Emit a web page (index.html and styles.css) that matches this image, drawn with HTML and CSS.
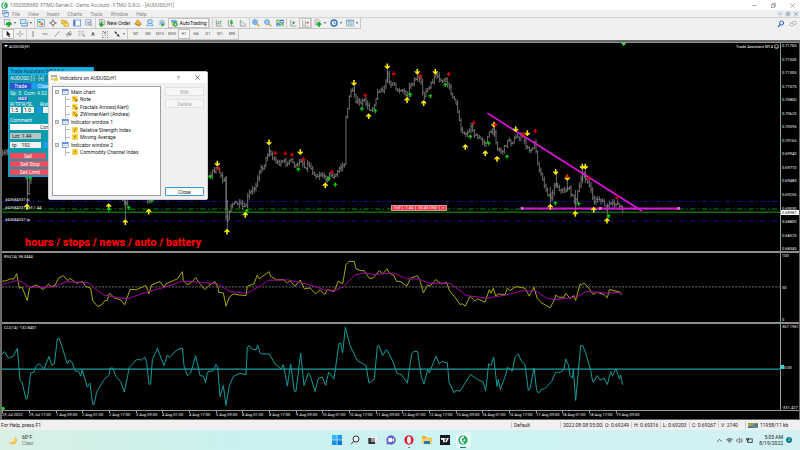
FILE: index.html
```html
<!DOCTYPE html>
<html lang="en">
<head>
<meta charset="utf-8">
<title>FTMO Terminal - AUDUSD,H1</title>
<link rel="stylesheet" href="styles.css">
</head>
<body>
<svg class="defs" aria-hidden="true">
  <symbol id="i-logo" viewBox="0 0 24 24"><circle cx="12" cy="12" r="11" fill="#21a95c"/><path d="M14 3a9 9 0 1 0 0 18v-4a5 5 0 0 1 0-10z" fill="#fff"/><path d="M10 12h4l3-4v8l-3-3z" fill="#fff"/></symbol>
  <symbol id="i-windows" viewBox="0 0 24 24"><rect x="2" y="2" width="15" height="12" fill="#cfe2f6" stroke="#4a82c4" stroke-width="2"/><rect x="7" y="8" width="15" height="14" fill="#e9f2fb" stroke="#4a82c4" stroke-width="2"/><path d="M7 10h15" stroke="#4a82c4" stroke-width="3"/></symbol>
  <symbol id="i-newchart" viewBox="0 0 24 24"><rect x="1" y="2" width="17" height="14" fill="#f2f5f8" stroke="#7f95a8" stroke-width="2"/><path d="M14 8v15M6 15h17" stroke="#1eab2b" stroke-width="7"/></symbol>
  <symbol id="i-profiles" viewBox="0 0 24 24"><rect x="1" y="2" width="17" height="12" fill="#d5e8f7" stroke="#5a90c4" stroke-width="2"/><path d="M5 17v4h17V8" fill="none" stroke="#5a90c4" stroke-width="3"/></symbol>
  <symbol id="i-market" viewBox="0 0 24 24"><rect x="2" y="2" width="20" height="20" fill="#eef6ff" stroke="#4c9de0" stroke-width="2"/><path d="M5 6h6v6H5z" fill="#20b23a"/><path d="M11 11h8v8h-8z" fill="#ee6a30"/><path d="M14 5h5M5 17h4" stroke="#efc838" stroke-width="3"/></symbol>
  <symbol id="i-target" viewBox="0 0 24 24"><circle cx="12" cy="12" r="6" fill="none" stroke="#777" stroke-width="2"/><path d="M12 1v8M12 15v8M1 12h8M15 12h8" stroke="#666" stroke-width="3"/></symbol>
  <symbol id="i-folder" viewBox="0 0 24 24"><path d="M2 3h7l2 3h7v9H2z" fill="#f4cf48" stroke="#c69a20" stroke-width="2"/><path d="M9 11h6l2 3h6v8H9z" fill="#ffe27a" stroke="#c69a20" stroke-width="2"/></symbol>
  <symbol id="i-panel" viewBox="0 0 24 24"><rect x="1" y="3" width="22" height="18" fill="#f4f9ff" stroke="#4787cc" stroke-width="2"/><path d="M2 4h5v16H2z" fill="#3b74c0"/></symbol>
  <symbol id="i-tester" viewBox="0 0 24 24"><rect x="2" y="2" width="16" height="16" fill="#e8eef4" stroke="#8b9fb4" stroke-width="2"/><path d="M5 14l4-6 4 4 4-7" fill="none" stroke="#4d87c7" stroke-width="2"/><circle cx="15" cy="14" r="4" fill="#d8ecfb" stroke="#667f96" stroke-width="2"/><path d="M18 17l5 5" stroke="#dba52b" stroke-width="3"/></symbol>
  <symbol id="i-order" viewBox="0 0 24 24"><path d="M5 1h11l4 4v12H5z" fill="#eee" stroke="#888" stroke-width="2"/><path d="M8 6h7M8 10h9" stroke="#777" stroke-width="2"/><path d="M10 11v12M4 17h12" stroke="#1da829" stroke-width="6"/></symbol>
  <symbol id="i-diamond" viewBox="0 0 24 24"><path d="M11 2l10 11-5 7L3 14z" fill="#f2b431" stroke="#bd7f13" stroke-width="2"/><path d="M3 15l13 6 5-6" fill="none" stroke="#8c671d" stroke-width="2"/></symbol>
  <symbol id="i-expert" viewBox="0 0 24 24"><rect x="5" y="2" width="14" height="12" rx="4" fill="#bcdcf5" stroke="#5093cf" stroke-width="2"/><path d="M2 20l4-6h12l4 6z" fill="#e2f0fb" stroke="#4a92d6" stroke-width="2"/></symbol>
  <symbol id="i-signal" viewBox="0 0 24 24"><circle cx="12" cy="12" r="9" fill="none" stroke="#9eb6c9" stroke-width="2"/><circle cx="12" cy="12" r="5" fill="#a7d2ee" stroke="#5b92ba" stroke-width="2"/><path d="M14 12v10M10 17h9" stroke="#24a23b" stroke-width="3"/></symbol>
  <symbol id="i-auto" viewBox="0 0 24 24"><ellipse cx="12" cy="7" rx="10" ry="5" fill="#63aee4"/><path d="M3 10c4 4 14 4 18 0l-2 9c-3 4-11 4-14 0z" fill="#f3ca43"/><circle cx="16" cy="16" r="7" fill="#22a640"/><path d="M14 12l6 4-6 4z" fill="#fff"/></symbol>
  <symbol id="i-bars" viewBox="0 0 24 24"><path d="M4 2v19h18" fill="none" stroke="#777" stroke-width="2"/><path d="M10 6v10M7 14h3M16 5v12M16 7h4" fill="none" stroke="#239b32" stroke-width="2"/></symbol>
  <symbol id="i-candles" viewBox="0 0 24 24"><path d="M4 2v19h18" fill="none" stroke="#777" stroke-width="2"/><path d="M13 2v17" stroke="#17812a" stroke-width="2"/><path d="M10 5h7v10h-7z" fill="#25b442"/></symbol>
  <symbol id="i-line" viewBox="0 0 24 24"><path d="M4 2v19h18" fill="none" stroke="#777" stroke-width="2"/><path d="M6 7c6 0 7 9 15 9" fill="none" stroke="#35a64b" stroke-width="2"/></symbol>
  <symbol id="i-zoomin" viewBox="0 0 24 24"><path d="M14 14l8 8" stroke="#d9a32b" stroke-width="4"/><circle cx="9" cy="9" r="7" fill="#d8edfc" stroke="#3f8cd5" stroke-width="3"/><path d="M9 5v8M5 9h8" stroke="#246fbb" stroke-width="2"/></symbol>
  <symbol id="i-zoomout" viewBox="0 0 24 24"><path d="M14 14l8 8" stroke="#d9a32b" stroke-width="4"/><circle cx="9" cy="9" r="7" fill="#d8edfc" stroke="#3f8cd5" stroke-width="3"/><path d="M5 9h8" stroke="#246fbb" stroke-width="2"/></symbol>
  <symbol id="i-tile" viewBox="0 0 24 24"><path d="M1 2h10v9H1zM13 13h10v9H13z" fill="#55b24c"/><path d="M13 2h10v9H13zM1 13h10v9H1z" fill="#2e6fc2"/><path d="M3 6h6v3H3zM15 6h6v3h-6zM3 17h6v3H3zM15 17h6v3h-6z" fill="#e6f3ff"/></symbol>
  <symbol id="i-scroll" viewBox="0 0 24 24"><path d="M5 3v18h17" fill="none" stroke="#777" stroke-width="2"/><path d="M11 6l8 5-8 6z" fill="#25a63b"/></symbol>
  <symbol id="i-shift" viewBox="0 0 24 24"><path d="M5 3v18h17M13 4v14" fill="none" stroke="#6d7f91" stroke-width="2"/><path d="M22 6v9l-7-4z" fill="#cb5540"/></symbol>
  <symbol id="i-indic" viewBox="0 0 24 24"><path d="M3 2h11l4 4v12H3z" fill="#eee" stroke="#999" stroke-width="2"/><path d="M7 14c2 0 2-9 5-8" fill="none" stroke="#666" stroke-width="2"/><path d="M15 9v14M8 16h14" stroke="#1cae2b" stroke-width="6"/></symbol>
  <symbol id="i-clock" viewBox="0 0 24 24"><circle cx="12" cy="12" r="9" fill="#f1f8ff" stroke="#2a73c5" stroke-width="4"/><path d="M12 6v7h5" fill="none" stroke="#555" stroke-width="2"/></symbol>
  <symbol id="i-template" viewBox="0 0 24 24"><rect x="2" y="3" width="20" height="18" fill="#e3eefa" stroke="#6a93bd" stroke-width="2"/><path d="M2 6h20" stroke="#6a93bd" stroke-width="3"/><path d="M5 13l5-3 4 3 5-3M5 18l5-3 4 3 5-3" fill="none" stroke="#6c9c83" stroke-width="2"/></symbol>
  <symbol id="i-cursor" viewBox="0 0 24 24"><path d="M8 2v17l4-4 3 7 3-1-3-7h5z" fill="#222"/></symbol>
  <symbol id="i-cross" viewBox="0 0 24 24"><path d="M12 2v8M12 14v8M2 12h8M14 12h8" stroke="#777" stroke-width="2"/></symbol>
  <symbol id="i-vline" viewBox="0 0 24 24"><path d="M12 3v18" stroke="#555" stroke-width="2"/></symbol>
  <symbol id="i-hline" viewBox="0 0 24 24"><path d="M4 12h16" stroke="#555" stroke-width="2"/></symbol>
  <symbol id="i-trend" viewBox="0 0 24 24"><path d="M4 20L20 4" stroke="#666" stroke-width="2"/></symbol>
  <symbol id="i-channel" viewBox="0 0 24 24"><path d="M2 16L18 3M5 21L21 8M5 12l14 1M10 7l7 11" stroke="#666" stroke-width="2"/></symbol>
  <symbol id="i-fibo" viewBox="0 0 24 24"><path d="M3 4h18M3 10h18M3 16h14" stroke="#777" stroke-width="2" stroke-dasharray="2 2"/><path d="M17 15h5v6" fill="none" stroke="#777" stroke-width="2"/></symbol>
  <symbol id="i-arrows" viewBox="0 0 24 24"><path d="M4 4l8 3-5 5zM20 20l-9-2 6-6z" fill="#333"/><path d="M8 8l8 8" stroke="#333" stroke-width="2"/></symbol>
  <symbol id="i-caret" viewBox="0 0 6 6"><path d="M0 1h6L3 5z" fill="#222"/></symbol>
  <symbol id="i-search" viewBox="0 0 24 24"><circle cx="14" cy="9" r="6" fill="none" stroke="#2869c6" stroke-width="3"/><path d="M10 13l-7 8" stroke="#2869c6" stroke-width="4"/></symbol>
  <symbol id="i-chat" viewBox="0 0 30 24"><ellipse cx="19" cy="8" rx="9" ry="6" fill="#eee" stroke="#999" stroke-width="2"/><ellipse cx="10" cy="14" rx="8" ry="5" fill="#f8f8f8" stroke="#888" stroke-width="2"/></symbol>
  <symbol id="i-min" viewBox="0 0 12 12"><path d="M1 6h10" stroke="currentColor" stroke-width="1.5"/></symbol>
  <symbol id="i-restore" viewBox="0 0 12 12"><path d="M1 4h7v7H1zM4 4V1h7v7H8" fill="none" stroke="currentColor" stroke-width="1.5"/></symbol>
  <symbol id="i-close" viewBox="0 0 12 12"><path d="M1 1l10 10M11 1L1 11" stroke="currentColor" stroke-width="1.5"/></symbol>
  <symbol id="i-win" viewBox="0 0 24 18"><rect x="1" y="1" width="20" height="16" fill="#fff" stroke="#2a66d8" stroke-width="2"/><path d="M1 3h20" stroke="#2a66d8" stroke-width="4"/><path d="M4 13l4-5 4 5 5-5" fill="none" stroke="#6d9ae6" stroke-width="2"/></symbol>
  <symbol id="i-fx" viewBox="0 0 18 18"><rect x="0" y="0" width="18" height="18" rx="2" fill="#f7d548"/><path d="M12 4c-3-1-3 1-3 4s-1 6-3 6M6 8h6" fill="none" stroke="#a87809" stroke-width="2"/></symbol>
  <symbol id="i-fxc" viewBox="0 0 18 18"><rect x="0" y="0" width="17" height="17" rx="2" fill="#f7d548"/><path d="M4 4l5 5M9 4L5 9" stroke="#7d5b0a" stroke-width="2"/><path d="M9 13l4-4 4 4-4 4z" fill="#e4a811" stroke="#6e5413" stroke-width="2"/></symbol>
</svg>

<div class="app">
  <header class="titlebar">
    <svg class="ico6"><use href="#i-logo"/></svg>
    <span class="title">1300308680: FTMO-Server2 - Demo Account - FTMO S.R.O. - [AUDUSD,H1]</span>
    <div class="winbtns">
      <button aria-label="Minimize"><svg><use href="#i-min"/></svg></button>
      <button aria-label="Restore"><svg><use href="#i-restore"/></svg></button>
      <button aria-label="Close"><svg><use href="#i-close"/></svg></button>
    </div>
  </header>
  <nav class="menubar">
    <svg class="ico6"><use href="#i-windows"/></svg>
    <button>File</button><button>View</button><button>Insert</button><button>Charts</button><button>Tools</button><button>Window</button><button>Help</button>
    <div class="mdi">
      <button aria-label="Minimize chart"><svg><use href="#i-min"/></svg></button>
      <button aria-label="Restore chart"><svg><use href="#i-restore"/></svg></button>
      <button aria-label="Close chart"><svg><use href="#i-close"/></svg></button>
    </div>
  </nav>

  <div class="tools">
    <div class="toolrow">
      <div class="bar">
        <button class="dd" aria-label="New chart"><svg><use href="#i-newchart"/></svg><svg class="caret"><use href="#i-caret"/></svg></button>
        <button class="dd" aria-label="Profiles"><svg><use href="#i-profiles"/></svg><svg class="caret"><use href="#i-caret"/></svg></button>
        <i class="sep"></i>
        <button class="tb" aria-label="Market Watch"><svg><use href="#i-market"/></svg></button>
        <button class="tb" aria-label="Data Window"><svg><use href="#i-target"/></svg></button>
        <button class="tb" aria-label="Navigator"><svg><use href="#i-folder"/></svg></button>
        <button class="tb" aria-label="Terminal"><svg><use href="#i-panel"/></svg></button>
        <button class="tb" aria-label="Strategy Tester"><svg><use href="#i-tester"/></svg></button>
        <i class="sep"></i>
        <button class="wide"><svg><use href="#i-order"/></svg>New Order</button>
        <button class="tb" aria-label="MetaEditor"><svg><use href="#i-diamond"/></svg></button>
        <button class="tb" aria-label="Experts"><svg><use href="#i-expert"/></svg></button>
        <button class="tb" aria-label="Signals"><svg><use href="#i-signal"/></svg></button>
        <button class="wide pressed"><svg><use href="#i-auto"/></svg>AutoTrading</button>
        <i class="sep grip"></i>
        <button class="tb" aria-label="Bar chart"><svg><use href="#i-bars"/></svg></button>
        <button class="tb" aria-label="Candlesticks"><svg><use href="#i-candles"/></svg></button>
        <button class="tb" aria-label="Line chart"><svg><use href="#i-line"/></svg></button>
        <i class="sep"></i>
        <button class="tb" aria-label="Zoom in"><svg><use href="#i-zoomin"/></svg></button>
        <button class="tb" aria-label="Zoom out"><svg><use href="#i-zoomout"/></svg></button>
        <button class="tb" aria-label="Tile windows"><svg><use href="#i-tile"/></svg></button>
        <i class="sep"></i>
        <button class="tb" aria-label="Auto scroll"><svg><use href="#i-scroll"/></svg></button>
        <button class="tb pressed" aria-label="Chart shift"><svg><use href="#i-shift"/></svg></button>
        <i class="sep"></i>
        <button class="dd" aria-label="Indicators"><svg><use href="#i-indic"/></svg><svg class="caret"><use href="#i-caret"/></svg></button>
        <button class="dd" aria-label="Periods"><svg><use href="#i-clock"/></svg><svg class="caret"><use href="#i-caret"/></svg></button>
        <button class="dd" aria-label="Templates"><svg><use href="#i-template"/></svg><svg class="caret"><use href="#i-caret"/></svg></button>
      </div>
      <div class="find">
        <button class="tb" aria-label="Search"><svg><use href="#i-search"/></svg></button>
        <button class="tb" aria-label="Chat"><svg><use href="#i-chat"/></svg></button>
      </div>
    </div>
    <div class="toolrow">
      <div class="bar">
        <button class="tb pressed" aria-label="Cursor"><svg><use href="#i-cursor"/></svg></button>
        <button class="tb" aria-label="Crosshair"><svg><use href="#i-cross"/></svg></button>
        <i class="sep"></i>
        <button class="tb" aria-label="Vertical line"><svg><use href="#i-vline"/></svg></button>
        <button class="tb" aria-label="Horizontal line"><svg><use href="#i-hline"/></svg></button>
        <button class="tb" aria-label="Trendline"><svg><use href="#i-trend"/></svg></button>
        <button class="tb" aria-label="Channel"><svg><use href="#i-channel"/></svg></button>
        <button class="tb" aria-label="Fibonacci"><svg><use href="#i-fibo"/></svg></button>
        <button class="tb letter">A</button>
        <button class="tb"><span class="boxed">T</span></button>
        <button class="dd" aria-label="Arrows"><svg><use href="#i-arrows"/></svg><svg class="caret"><use href="#i-caret"/></svg></button>
      </div>
      <div class="bar periods">
        <button class="tb">M1</button><button class="tb">M5</button><button class="tb">M15</button><button class="tb">M30</button><button class="tb pressed">H1</button><button class="tb">H4</button><button class="tb">D1</button><button class="tb">W1</button><button class="tb">MN</button>
      </div>
    </div>
  </div>

  <main class="workspace">
    <section class="pane main">
      <div class="plot">
        <svg id="price" viewBox="6 6 2334 630" preserveAspectRatio="none"></svg>
        <span class="cap sym"><svg class="caret"><path d="M0 1h4L2 3z" fill="#fff"/></svg>AUDUSD,H1</span>
        <span class="cap assist">Trade Assistant MT4<svg viewBox="0 0 12 12"><circle cx="6" cy="6" r="5" fill="none" stroke="#ddd" stroke-width="1.5"/><path d="M3 5h1M8 5h1M3 8q3 2 6 0" stroke="#ddd" stroke-width="1.5" fill="none"/></svg></span>
        <span class="cap line sl">#43684337 sl</span>
        <span class="cap line sell">#43684337 sell 1.44</span>
        <span class="cap line tp">#43684337 tp</span>
        <div class="ticket"><b>Sell</b><b>1.44</b><b>50.40 USD</b><b>x</b></div>
        <div class="slogan">hours / stops / news / auto / battery</div>
      </div>
      <div class="axis prices">
        <span>0.71760</span><span>0.71530</span><span>0.71305</span><span>0.71075</span><span>0.70850</span><span>0.70620</span><span>0.70395</span><span>0.70165</span><span>0.69940</span><span>0.69710</span><span>0.69485</span><span>0.69255</span><span>0.69030</span><span>0.68800</span><span>0.68575</span><span>0.68345</span>
        <span class="now">0.68987</span>
      </div>
    </section>
    <section class="pane">
      <div class="plot"><svg id="rsi" viewBox="6 12 2334 207" preserveAspectRatio="none"></svg><span class="cap head">RSI(14) 38.0444</span></div>
      <div class="axis"><span>100</span><span>50</span><span>0</span></div>
    </section>
    <section class="pane">
      <div class="plot"><svg id="cci" viewBox="6 225 2334 258" preserveAspectRatio="none"></svg><span class="cap head">CCI(14) -132.8401</span></div>
      <div class="axis"><span>367.1961</span><span class="zero">0.00</span><span>-331.427</span></div>
    </section>
    <div class="dates">
      <span>29 Jul 2022</span><span>29 Jul 17:00</span><span>1 Aug 09:00</span><span>2 Aug 01:00</span><span>2 Aug 17:00</span><span>3 Aug 09:00</span><span>4 Aug 01:00</span><span>4 Aug 17:00</span><span>5 Aug 09:00</span><span>8 Aug 01:00</span><span>8 Aug 17:00</span><span>9 Aug 09:00</span><span>10 Aug 01:00</span><span>10 Aug 17:00</span><span>11 Aug 09:00</span><span>12 Aug 01:00</span><span>12 Aug 17:00</span><span>15 Aug 09:00</span><span>16 Aug 01:00</span><span>16 Aug 17:00</span><span>17 Aug 09:00</span><span>18 Aug 01:00</span><span>18 Aug 17:00</span><span>19 Aug 09:00</span>
    </div>

    <section class="assistant" aria-label="Trade Assistant">
      <div class="a-title">Trade Assistant MT4 9.6</div>
      <div class="a-sym">AUDUSD [-] - [+]</div>
      <div class="a-row tabs"><button class="t1">Trade</button><button class="t2">Close</button></div>
      <div class="a-row stat"><span>Sp: 5</span><span>Com: 4.32</span></div>
      <div class="a-row tag"><b>MAX</b></div>
      <div class="a-row labels"><label for="rtp">R/TP</label><label for="rsl">R/SL</label><label for="risk">Risk</label></div>
      <div class="a-row fields"><input id="rtp" value="1.5"><input id="rsl" value="1.0"><i></i><input id="risk" value="2"></div>
      <label class="a-com" for="com">Comment</label>
      <input class="a-in" id="com" value="Comment">
      <div class="a-row pair"><input class="grey" aria-label="Lot" value="Lot: 1.44"><button>E</button></div>
      <div class="a-row pair"><input aria-label="Take profit" value="tp    192"><button>P</button></div>
      <div class="a-sells"><button>Sell</button><button>Sell Stop</button><button>Sell Limit</button></div>
    </section>

    <section class="dialog" role="dialog" aria-label="Indicators on AUDUSD,H1">
      <header><svg class="d-ico" viewBox="0 0 21 18"><rect x="1" y="1" width="16" height="13" fill="#e3f0fd" stroke="#e6a623" stroke-width="2"/><path d="M1 3h16" stroke="#4b94da" stroke-width="3"/><rect x="9" y="8" width="11" height="10" fill="#f5cb32"/></svg><h1>Indicators on AUDUSD,H1</h1><button>?</button><button aria-label="Close dialog"><svg><use href="#i-close"/></svg></button></header>
      <div class="d-body">
        <ul class="tree">
          <li class="grp"><i></i><svg><use href="#i-win"/></svg>Main chart</li>
          <li class="leaf"><i></i><svg><use href="#i-fxc"/></svg>Note</li>
          <li class="leaf"><i></i><svg><use href="#i-fxc"/></svg>Fractals Arrows(Alert)</li>
          <li class="leaf"><i></i><svg><use href="#i-fxc"/></svg>ZWinnerAlert (Andrea)</li>
          <li class="grp"><i></i><svg><use href="#i-win"/></svg>Indicator window 1</li>
          <li class="leaf"><i></i><svg><use href="#i-fx"/></svg>Relative Strength Index</li>
          <li class="leaf"><i></i><svg><use href="#i-fx"/></svg>Moving Average</li>
          <li class="grp"><i></i><svg><use href="#i-win"/></svg>Indicator window 2</li>
          <li class="leaf"><i></i><svg><use href="#i-fx"/></svg>Commodity Channel Index</li>
        </ul>
        <div class="d-btns"><button disabled>Edit</button><button disabled>Delete</button><button class="primary">Close</button></div>
      </div>
    </section>
  </main>

  <footer class="status">
    <span class="help">For Help, press F1</span>
    <span class="c0">Default</span><span class="c1">2022.08.08 05:00</span><span class="c2">O: 0.69249</span><span class="c2">H: 0.69316</span><span class="c2">L: 0.69203</span><span class="c2">C: 0.69267</span><span class="c3">V: 2140</span>
    <span class="net"><svg viewBox="0 0 30 15"><rect width="30" height="15" fill="#4f7591"/><path d="M0 0h30L0 12z" fill="#8da33c"/><path d="M0 5l30 9" stroke="#dde3c0"/></svg>11958/11 kb</span>
  </footer>

  <footer class="taskbar">
    <div class="weather">
      <svg viewBox="0 0 24 24"><path d="M15 1c10 7 7 20-4 21-5 1-9-2-10-6 9 3 16-4 14-15z" fill="#f8b21c"/><path d="M15 1c6 7 5 15-3 18-4 1-8 0-11-3 9 3 16-4 14-15z" fill="#ffd24e"/></svg>
      <p><span>60°F</span><span class="dim">Clear</span></p>
    </div>
    <div class="apps">
      <button aria-label="Start"><svg viewBox="0 0 30 30"><path d="M0 0h14v14H0z" fill="#38b6f2"/><path d="M16 0h14v14H16z" fill="#1f9ceb"/><path d="M0 16h14v14H0z" fill="#1b8fe4"/><path d="M16 16h14v14H16z" fill="#0878d4"/></svg></button>
      <button aria-label="Search"><svg viewBox="0 0 30 30"><circle cx="18" cy="12" r="9" fill="#e6f6f8" stroke="#333" stroke-width="3"/><path d="M11 19L3 28" stroke="#333" stroke-width="3"/></svg></button>
      <button aria-label="Task view"><svg viewBox="0 0 30 30"><rect x="9" y="3" width="20" height="18" fill="#f6f6f6" stroke="#ccc"/><rect x="1" y="9" width="20" height="18" fill="#333"/><path d="M9 9h12v12H9z" fill="#999"/></svg></button>
      <button aria-label="Chat"><svg viewBox="0 0 30 30"><path d="M15 1a14 14 0 1 1-7 26l-7 2 2-7A14 14 0 0 1 15 1z" fill="#6065cd"/><rect x="7" y="9" width="11" height="12" rx="2" fill="#fff"/><path d="M19 13l5-3v10l-5-3z" fill="#fff"/></svg></button>
      <button class="run" aria-label="Opera"><svg viewBox="0 0 30 30"><ellipse cx="15" cy="15" rx="14" ry="14" fill="#e31b2d"/><ellipse cx="15" cy="15" rx="6" ry="11" fill="#def5f5"/></svg></button>
      <button aria-label="File Explorer"><svg viewBox="0 0 30 30"><path d="M0 4h11l3 4h15v18H0z" fill="#e9a820"/><path d="M0 10h30v16H0z" fill="#fdd15b"/><path d="M6 18h18v9H6z" fill="#1c78c8"/></svg></button>
      <button aria-label="TradingView"><svg viewBox="0 0 30 30"><rect width="30" height="30" fill="#15181f"/><path d="M3 9h11v13h-5v-8H3zM20 22h-5l6-13h6z" fill="#fff"/><circle cx="17" cy="11" r="2" fill="#fff"/></svg></button>
      <button class="run active" aria-label="FTMO terminal"><svg viewBox="0 0 24 24"><use href="#i-logo"/></svg></button>
    </div>
    <div class="tray">
      <svg viewBox="0 0 18 18"><path d="M3 12l6-6 6 6" fill="none" stroke="#333" stroke-width="2"/></svg>
      <svg viewBox="0 0 18 18"><path d="M9 16L1 7q8-7 16 0z" fill="#9aa7aa"/><path d="M1 7q8-7 16 0M5 11q4-3 8 0" fill="none" stroke="#555" stroke-width="2"/></svg>
      <svg viewBox="0 0 18 18"><path d="M1 7h3l5-4v12l-5-4H1z" fill="#eee" stroke="#444" stroke-width="1.5"/><path d="M12 6q2 3 0 6M14 3q4 6 0 12" fill="none" stroke="#444" stroke-width="1.5"/></svg>
      <svg viewBox="0 0 18 18"><rect x="5" y="5" width="11" height="9" fill="none" stroke="#222" stroke-width="2"/><path d="M1 2v5h5V2M4 7v6" fill="none" stroke="#222" stroke-width="2"/></svg>
      <p><span>5:03 AM</span><span>8/19/2022</span></p>
      <b>2</b>
    </div>
  </footer>
</div>
<script src="chart.js"></script>
</body>
</html>
```
FILE: styles.css
```css
* { box-sizing: border-box; }
body { margin: 0; font: 5px/6px Roboto, "Liberation Sans", sans-serif; color: #222; background: #f0f0f0; }
button, input { font: inherit; color: inherit; border: 0; padding: 0; margin: 0; background: none; min-width: 0; }
p, h1, ul { margin: 0; padding: 0; list-style: none; font-size: inherit; font-weight: 400; }
p span { display: block; }
.defs { position: absolute; width: 0; height: 0; }
.app { display: flex; flex-direction: column; height: 100vh; overflow: hidden; }
.app > * { min-height: 0; }

.titlebar { flex: 0 0 10px; display: flex; align-items: center; gap: 2px; padding: 0 5px 0 1px; background: #fff; color: #7c7c7c; }
.ico6 { width: 7px; height: 7px; }
.winbtns { margin-left: auto; display: flex; gap: 13px; }
.winbtns button { width: 6px; height: 6px; display: flex; align-items: center; justify-content: center; }
.winbtns svg { width: 5px; height: 5px; color: #777; }
.menubar { flex: 0 0 8px; display: flex; align-items: center; padding: 0 1px 0 2px; gap: 8px; color: #858585; border-bottom: 1px solid #d4d4d4; }
.menubar > svg { margin-right: -5px; }
.mdi { margin-left: auto; display: flex; gap: 2px; }
.mdi button { width: 6px; height: 6px; display: flex; align-items: center; justify-content: center; background: #e2e6ea; }
.mdi svg { width: 4px; height: 4px; color: #71849a; }

.tools { flex: 0 0 22px; display: flex; flex-direction: column; background: #f0f0f0; }
.toolrow { flex: 0 0 11px; min-height: 0; display: flex; align-items: stretch; justify-content: space-between; padding-right: 1px; }
.toolrow + .toolrow { justify-content: flex-start; }
.bar { display: flex; align-items: stretch; padding-left: 2px; border: solid #c8c8c8; border-width: 0 1px 1px 0; color: #111; }
.bar svg, .find svg { width: 8px; height: 8px; flex: none; }
.bar .caret { width: 2px; height: 2px; }
.tb { width: 12px; display: flex; align-items: center; justify-content: center; }
.dd { width: 16px; display: flex; align-items: center; justify-content: center; gap: 2px; }
.wide { display: flex; align-items: center; justify-content: center; gap: 1px; padding: 0 2px; }
.pressed { background: #f8f8f8; border: 1px solid #c2c2c2; }
.wide.pressed { padding: 0 1px; }
.sep { width: 1px; border-left: 1px solid #cdcdcd; }
.grip { width: 4px; border-right: 1px solid #cdcdcd; }
.find { display: flex; align-items: center; }
.letter { font-weight: 700; color: #555; }
.boxed { border: 1px dotted #999; padding: 0 1px; line-height: 5px; color: #555; }
.periods { color: #555; padding-left: 2px; font-size: 4px; }

.workspace { position: relative; flex: 1; min-height: 0; display: grid; grid-template-rows: 212fr 71fr 87fr 8px; background: #000; border: solid #6a6a6a; border-width: 2px 1px 1px 2px; color: #f2f2f2; font-size: 4px; line-height: 5px; }
.pane { display: flex; min-height: 0; border-bottom: 2px solid #8e8e8e; }
.pane:first-child { border-top: 1px solid #8e8e8e; }
.pane:nth-child(3) { border-bottom: 1px solid #999; }
.plot { position: relative; flex: 1; min-width: 0; overflow: hidden; border-right: 1px solid #999; }
.plot > svg { display: block; width: 100%; height: 100%; }
.axis { position: relative; flex: 0 0 18px; padding-left: 1px; display: flex; flex-direction: column; justify-content: space-between; white-space: nowrap; }
.axis .now { position: absolute; left: 0; right: 0; top: 167px; background: #fff; color: #222; padding-left: 1px; }
.axis .zero::before { content: ""; display: inline-block; width: 3px; height: 4px; margin-left: -1px; background: #22d8de; }
.cap { position: absolute; white-space: nowrap; }
.sym { left: 2px; top: 1px; }
.sym .caret { width: 4px; height: 4px; margin-right: 1px; }
.assist { right: 1px; top: 1px; display: flex; align-items: center; gap: 1px; }
.assist svg { width: 5px; height: 5px; }
.head { left: 2px; top: 1px; }
.line { left: 3px; }
.sl { top: 154px; }
.sell { top: 162px; }
.tp { top: 174px; }
.ticket { position: absolute; left: 50%; top: 162px; display: flex; gap: 1px; background: #d79299; border: 1px solid #d79299; line-height: 4px; }
.ticket b { font-weight: 400; background: #f23c4b; padding: 0 2px; color: #fff; }
.slogan { position: absolute; left: 23px; top: 192px; font: 900 11px/16px Roboto, "Liberation Sans", sans-serif; color: #f00; white-space: nowrap; }
.dates { display: flex; white-space: nowrap; overflow: hidden; }
.dates span { flex: 0 0 27px; width: 27px; border-left: 1px solid #999; height: 2px; line-height: 8px; text-indent: -1px; }
.dates span:nth-child(3n) { flex-basis: 26px; }

.assistant { position: absolute; left: 6px; top: 25px; width: 86px; display: flex; flex-direction: column; background: #0d9cae; border: 1px solid #0aa4d8; color: #e9fbff; font-size: 5px; line-height: 6px; }
.a-title { background: #14b1e2; color: #0a4254; padding-left: 1px; height: 7px; white-space: nowrap; }
.a-sym { background: #1590a8; height: 6px; padding-left: 1px; }
.a-row { display: flex; padding: 0 1px; }
.tabs { gap: 1px; margin-top: 2px; }
.tabs button { flex: 0 0 21px; height: 6px; background: #2f50d4; color: #fff; line-height: 6px; }
.tabs .t2 { flex-basis: 24px; background: #1f9df2; }
.stat { gap: 3px; margin-top: 1px; }
.tag { margin-top: 1px; padding-left: 8px; line-height: 4px; font-size: 4px; }
.tag b { background: #3450c8; padding: 0 1px; }
.labels { gap: 2px; }
.labels label { width: 10px; }
.labels label:nth-child(2) { width: 16px; }
.fields { gap: 2px; height: 6px; }
.fields input { width: 11px; background: #f4f4f4; color: #222; padding-left: 1px; }
.fields i { width: 3px; margin-left: 2px; background: #1f8fff; }
.fields input:last-child { flex: 1; padding-left: 5px; }
.a-com { margin: 4px 0 1px 1px; }
.a-in { margin: 0 1px; height: 6px; background: #fff; color: #222; text-align: center; }
.pair { margin-top: 3px; gap: 3px; height: 6px; }
.pair input { width: 31px; background: #f0f0f0; color: #222; padding-left: 2px; }
.pair .grey { background: #b9c3c5; }
.pair button { width: 12px; line-height: 6px; }
.pair + .pair button { background: #1f9df2; }
.a-sells { display: flex; flex-direction: column; gap: 2px; padding: 5px 1px 1px; }
.a-sells button { width: 40px; height: 6px; line-height: 6px; background: #f24a5c; color: #fff; }
.a-sells button:first-child { width: 36px; }

.dialog { position: absolute; left: 46px; top: 29px; width: 160px; height: 129px; display: flex; flex-direction: column; background: #f0f0f0; color: #222; border: 1px solid #d0d0d0; border-radius: 2px; font-size: 5px; line-height: 6px; overflow: hidden; }
.dialog header { flex: 0 0 11px; display: flex; align-items: center; background: #fff; padding: 0 6px 0 2px; }
.dialog header button { width: 7px; height: 7px; margin-left: 12px; display: flex; align-items: center; justify-content: center; }
.dialog header button svg { width: 5px; height: 5px; }
.dialog h1 + button { margin-left: auto; }
.d-ico { width: 7px; height: 6px; margin-right: 2px; }
.d-body { flex: 1; display: flex; gap: 4px; padding: 3px; }
.tree { flex: 1; border: 1px solid #a0a0a0; background: #fff; display: grid; grid-template-rows: repeat(9, 1fr); padding: 1px 0 39px; }
.tree li { display: flex; align-items: center; white-space: nowrap; padding-left: 2px; }
.tree svg { width: 6px; height: 6px; margin-right: 2px; }
.grp svg { width: 8px; }
.grp i { width: 4px; height: 4px; margin-right: 3px; border: 1px solid #aaa; background: #ddd; }
.tree .grp svg { width: 7px; margin-right: 2px; }
.leaf i { width: 5px; height: 100%; margin: 0 2px 0 10px; border-left: 1px solid #bbb; background: linear-gradient(#bbb, #bbb) center / 100% 1px no-repeat; }
.d-btns { flex: 0 0 39px; display: flex; flex-direction: column; gap: 3px; padding-top: 1px; }
.d-btns button { height: 9px; background: #fdfdfd; border: 1px solid #e2e2e2; line-height: 6px; }
.d-btns button:disabled { color: #aaa; background: #f6f6f6; }
.d-btns .primary { margin-top: auto; border-color: #3f96d2; border-radius: 1px; }

.status { flex: 0 0 10px; display: flex; align-items: center; padding-left: 1px; background: #f0f0f0; white-space: nowrap; }
.status > span { padding-left: 2px; border-left: 1px solid #c8c8c8; }
.status .help { flex: 1; border: 0; padding: 0; }
.status .c0 { flex: 0 0 49px; }
.status .c1 { flex: 0 0 42px; }
.status .c2 { flex: 0 0 29px; }
.status .c3 { flex: 0 0 27px; }
.status .net { flex: 0 0 55px; display: flex; gap: 2px; align-items: center; }
.net svg { width: 10px; height: 5px; }

.taskbar { flex: 0 0 20px; display: grid; grid-template-columns: 1fr auto 1fr; align-items: center; background: linear-gradient(90deg, #d9f0e4, #c9f1f0 30%, #cdf3f2 60%, #d3f1f5); }
.weather { display: flex; align-items: center; gap: 4px; padding-left: 9px; }
.weather svg { width: 9px; height: 9px; }
.dim { color: #6b7b7b; }
.apps { display: flex; gap: 3px; }
.apps button { position: relative; width: 15px; height: 16px; display: flex; align-items: center; justify-content: center; border-radius: 2px; }
.apps svg { width: 10px; height: 10px; }
.apps .active { background: #e6f9f8; }
.run::after { content: ""; position: absolute; bottom: 0; left: 50%; width: 2px; height: 1px; margin-left: -1px; background: #6d8387; }
.run.active::after { width: 6px; margin-left: -3px; background: #157a86; }
.tray { display: flex; align-items: center; justify-content: flex-end; gap: 3px; padding-right: 8px; text-align: right; }
.tray svg { width: 7px; height: 7px; }
.tray p { width: 27px; }
.tray b { width: 6px; height: 6px; border-radius: 50%; background: #0e7c8c; color: #fff; font-size: 4px; font-weight: 400; text-align: center; }
```
FILE: chart.js
```javascript
// Series are stored as [x offset, "x,y x,y ..."] runs in plot units (3 units = 1px).
const NS = "http://www.w3.org/2000/svg";

function points(runs) {
  return runs.flatMap(([dx, s]) => s.split(" ").map(p => {
    const [x, y] = p.split(",").map(Number);
    return [x + dx, y];
  }));
}

function add(id, tag, attrs) {
  const el = document.createElementNS(NS, tag);
  for (const k in attrs) el.setAttribute(k, attrs[k]);
  document.getElementById(id).appendChild(el);
}

function path(id, d, stroke, width, extra) {
  add(id, "path", { d, stroke, fill: "none", "stroke-width": width, ...extra });
}

const toPath = pts => "M" + pts.map(p => p.join(",")).join("L");

const price = points([
  [0, "8,345 20,335 35,345 50,320 65,350 75,380 82,470 90,400 110,370 150,350 200,390 240,380 280,420 310,430 326,460 345,440 360,460 376,500 390,450 420,430 447,490 455,440 480,390 520,410 560,380 600,400 630,405 652,382 662,410 672,430"],
  [660, "13,420 18,530 22,540 30,500 42,490 60,495 75,507 85,465 100,450 110,430 115,395 130,380 140,350 148,330 160,358 175,370 190,360 200,375 212,358 222,375 232,380 241,355 255,385 265,370 275,390 290,410 305,400 315,418 328,404 345,412 358,385 373,372 378,235 388,165 400,145 408,180 420,190 435,180 447,208 460,200 470,165 480,145 490,152 502,102 512,130 520,125 528,150 545,145 560,163 572,130 592,110 602,125 611,168 622,145 630,140 646,102 658,118"],
  [1320, "5,120 20,118 30,150 38,165 50,200 62,260 76,288 85,270 95,258 105,290 120,295 136,308 148,280 162,265 172,325 185,335 200,310 207,295 215,308 230,290 250,292 262,325 272,335 285,305 295,380 310,420 318,455 331,475 346,430 360,450 375,455 385,440 395,465 405,488 415,450 428,405 435,408 445,430 455,460 462,485 475,475 490,490 500,510 508,490 520,495 530,487 540,498 548,512"]
]);

const spikes = { 269: [318, 350], 354: [135, 150], 387: [85, 125], 494: [262, 290], 556: [402, 440], 567: [420, 450], 582: [388, 430], 585: [388, 430], 27: [410, 500], 226: [410, 510], 227: [480, 570], 125: [470, 540], 607: [490, 535], 550: [440, 495], 575: [450, 515] };

const lineSet = [
  [485, "#1212a0", "15 8 4 8"], [508, "#0b8f0b", "15 8 4 8"], [544, "#1212a0", "15 8 4 8"]
];
lineSet.forEach(([y, c, dash]) => path("price", `M6,${y}H2340`, c, 3, { "stroke-dasharray": dash }));
path("price", "M6,517.5H2340", "#00a000", 3);

// OHLC bars, one every 5 units
let seed = 7, k = 0, bars = "", last = null;
const rnd = () => (seed = (seed * 16807) % 2147483647) / 2147483647;
for (let x = 8; x <= 1868; x += 5) {
  while (k < price.length - 2 && price[k + 1][0] < x) k++;
  const [a, b] = [price[k], price[k + 1]];
  const y = a[1] + (b[1] - a[1]) * Math.min(1, Math.max(0, (x - a[0]) / (b[0] - a[0])));
  const prev = last === null ? y : last;
  const close = y + (rnd() - 0.5) * 12;
  const hi = Math.min(prev, close) - rnd() * 12;
  const lo = Math.max(prev, close) + rnd() * 12;
  bars += `M${x},${hi.toFixed(0)}V${lo.toFixed(0)}M${x - 2},${prev.toFixed(0)}h2M${x},${close.toFixed(0)}h3`;
  last = close;
}
for (const px in spikes) bars += `M${px * 3 + 1},${spikes[px][0]}V${spikes[px][1]}`;
path("price", bars, "#808080", 2.6);

path("price", "M1462,218L1926,514", "#e010e0", 5);
path("price", "M1566,506H2037", "#e010e0", 6);
[1566, 1801, 2036].forEach(x => add("price", "rect", { x: x - 4, y: 502, width: 8, height: 8, fill: "#ff6cff" }));
add("price", "path", { d: "M1863,6h16l-8,9z", fill: "#2be62b" });

function arrows(list, color, size, dir) {
  list.split(" ").forEach(p => {
    const [x, y] = p.split(",").map(v => v * 3);
    const cy = y - 120, s = size * dir;
    path("price", `M${x},${cy - s}V${cy + s * 0.7}`, color, size * 0.6);
    add("price", "path", { d: `M${x - size},${cy - s * 0.2}L${x},${cy + s * 0.2}L${x + size},${cy - s * 0.2}V${cy + s * 0.2}L${x},${cy + s * 1.2}L${x - size},${cy + s * 0.2}z`, fill: color });
  });
}
arrows("269,142 300.3,151.7 354,82 387.3,65.3 417.3,70.7 435.3,70.7 494,124 515.7,128.7 527.3,132.7 555.7,171.7 567.3,177.7 582.3,166.3 585.3,166.3 217.3,163.3", "#ffee00", 8, 1);
arrows("27,207 108.7,206.7 125.3,222.7 148.7,212 227,232.3 245.3,215.3 325.3,185.7 368.7,116 407,99.7 423.7,102.7 465.3,147 485.3,153.3 497,159 550.3,207.3 575.3,214.3 593.7,210.3 607,221.3", "#ffee00", 8, -1);
arrows("218.7,168.3 275.3,152.7 285.3,153 292,154.3 303.7,159 332,171.3 365.3,94.3 393.7,72.3 420.3,75 448.7,73 473.7,122 495.3,124 523.7,133.7 535.3,130.3 567,176 588.7,177.7 617,197.3", "#e80000", 6, 1);
arrows("30,178.3 108.7,210 128.7,208.3 152,200.7 210.3,177.3 246.7,211.3 298.3,169.7 328.7,179 335.3,185 362,108.7 375.3,110.7 410.3,94.3 430.3,95.7 445.3,84.3 470.3,136.7 488.7,143.3 507,156.7 555.3,203.7 578.7,204.3 608.7,216.7", "#00d800", 6, -1);

// RSI with its moving average
path("rsi", "M6,114H2340", "#a8a8a8", 2, { "stroke-dasharray": "6 4" });
path("rsi", toPath(points([
  [0, "6,97 20,95 30,90 42,90 50,74 58,118 66,115 82,155 88,118 108,108 130,122 146,105 152,113 165,110 175,88 190,80 203,95 210,88 230,103 248,98 256,112 272,118 278,155 293,173 305,168 315,155 322,155 328,133 345,148 362,153 374,168 390,122 410,122 430,113 438,110 447,135 455,108 480,98 492,115 498,105 520,95 532,90 547,68 550,95 562,108 575,100 587,86 598,103 615,122 627,110 645,98 655,118 655,130 670,132 678,172 688,145 700,135 715,138 738,140 742,112 762,105 772,78 778,90"],
  [780, "5,84 27,68 32,82 50,93 70,92 82,102 90,95 105,112 121,93 133,120 150,117 166,135 180,123 195,137 202,122 222,128 235,97 248,105 258,47 267,37 283,38 288,60 303,65 312,65 328,88 338,88 358,65 368,75 381,60 388,72 402,80 410,98 420,97 440,112 452,88 472,80 480,95 490,132 503,108 510,112 527,92 545,105 560,100 568,125 585,145 600,167 608,165 616,172 630,142 645,157 652,150 675,160 688,122 693,133 700,118 707,142 715,135 735,138 742,118 750,125 768,113 795,118 808,142"],
  [1590, "2,133 12,115 22,150 35,162 60,177 72,155 78,138 85,145 102,145 107,133 120,148 132,140 137,155 150,105 155,108 163,102 178,120 190,137 200,130 222,137 232,147 238,122 262,128 268,128 275,138"]
])), "#a8a800", 3);
path("rsi", toPath(points([
  [0, "6,106 50,95 68,100 90,115 160,114 200,98 268,102 280,115 310,138 330,142 380,150 430,133 500,113 550,96 620,102 655,106 690,128 740,133 780,112"],
  [780, "25,94 85,93 150,108 190,122 225,125 250,113 285,78 310,72 345,77 400,72 440,90 475,90 510,103 570,103 600,125 620,140 680,148 740,138 790,125 808,127"],
  [1590, "15,125 50,148 75,152 140,145 170,127 230,133 275,130"]
])), "#a800a8", 3);

// CCI
path("cci", "M6,360.5H2340", "#12a0a0", 4);
path("cci", toPath(points([
  [0, "6,315 14,308 25,328 40,322 52,298 60,395 66,400 78,450 82,450 92,372 102,370 107,352 118,345 132,360 147,323 155,348 163,345 172,270 177,267 185,290 202,345 208,333 216,340 226,367 236,367 242,382 246,362 262,415 270,403 278,467 282,467 290,430 312,392 328,378 330,358 338,357 348,383 362,398 373,430 388,355 398,345 410,332 425,333 434,325 440,340 447,407 452,405 457,333 472,298 492,350 502,318 508,325 532,302 547,298 552,350 562,380 572,372 580,345 587,320 600,380 610,382 617,402 622,370 640,365 648,347 653,355 660,443 670,410 678,470 688,410 700,383 720,373 738,378 742,295 748,290 755,300 768,303 773,288 780,312"],
  [780, "6,315 28,315 45,345 63,360 70,347 82,412 92,345 103,427 108,428 122,312 132,410 145,372 150,378 165,428 175,388 187,385 197,410 206,370 222,390 237,283 242,283 248,312 256,235 270,290 292,335 318,350 327,403 343,390 352,292 357,290 368,320 378,303 382,305 400,340 410,373 425,378 442,403 455,315 462,307 473,308 484,385 492,405 503,362 508,372 528,322 538,345 545,338 562,342 567,400 582,432 587,425 600,427 617,400 632,377 650,390 670,400 677,427 686,345 693,350 701,325 711,413 715,392 721,422 738,375 742,355 757,367 765,325 775,315 782,333 795,348 805,425"],
  [1590, "0,420 12,357 20,425 26,433 35,420 42,422 65,398 77,370 92,370 102,362 107,330 115,348 120,380 127,388 130,363 137,455 145,370 152,290 158,290 168,315 182,365 188,398 192,398 202,380 210,393 222,388 232,407 242,368 248,380 258,360 268,390 272,378 278,408"]
])), "#129c9c", 3);
add("cci", "circle", { cx: 9, cy: 479, r: 5, fill: "#18e018" });
```
